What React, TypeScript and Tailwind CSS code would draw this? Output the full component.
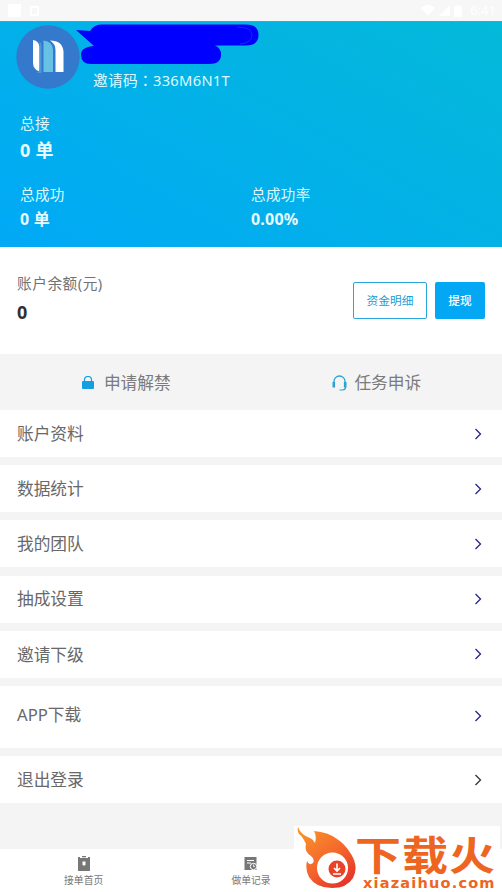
import clsx from "clsx";

const menuItems = [
  { label: "账户资料", height: "h-[47px]", color: "text-[#24248c]" },
  { label: "数据统计", height: "h-[47px]", color: "text-[#24248c]" },
  { label: "我的团队", height: "h-[47px]", color: "text-[#24248c]" },
  { label: "抽成设置", height: "h-[47px] pb-px", color: "text-[#24248c] mt-px" },
  { label: "邀请下级", height: "h-[47px]", color: "text-[#24248c]" },
  { label: "APP下载", height: "h-[62px] pb-[4px]", color: "text-[#24248c] mt-[3px]" },
  { label: "退出登录", height: "h-[47px]", color: "text-[#333333]" },
];

const StatusBar = () => (
  <div className="flex h-[21px] shrink-0 items-center justify-between bg-[#f7f7f7] pr-1.5 pl-2 text-white">
    <div className="flex items-center gap-[9px]">
      <div className="h-[13px] w-[13px] bg-white" />
      <div className="h-[10px] w-[9px] border-2 border-white" />
    </div>
    <div className="flex items-center gap-1">
      <svg width="14" height="11" viewBox="0 0 14 11" fill="currentColor">
        <path d="M0 3Q7-3 14 3L7 11Z" />
      </svg>
      <svg width="11" height="11" viewBox="0 0 11 11" fill="currentColor">
        <path d="M11 0V11H0Z" />
      </svg>
      <svg width="8" height="12" viewBox="0 0 8 12" fill="currentColor">
        <path d="M2.5 0h3v1.5H8V12H0V1.5h2.5Z" />
      </svg>
      <span className="ml-1 text-[13px] leading-none">6:41</span>
    </div>
  </div>
);

const Avatar = () => (
  <svg width="64" height="64" viewBox="0 0 64 64" className="shrink-0">
    <circle cx="32" cy="32" r="31.7" fill="#3479cc" />
    <path d="M17 15q6 1 6.500 7V46.500q-6.500-2-6.500-9Z" fill="#fff" />
    <path d="M23.500 16q2 2 2 6V48h-5q3-1 3-5Z" fill="#4a9bdb" />
    <path d="M27.500 15.500q9 1 9.500 9V47H27.500Z" fill="#66c1e4" />
    <path d="M34 15.500q12.500 0 13.500 11V47H39.500V25q0-6-5.500-9.500Z" fill="#fff" />
  </svg>
);

// marker strokes that hide the account name
const Redaction = () => (
  <svg
    className="absolute top-[2px] left-[76px]"
    width="185"
    height="43"
    viewBox="76 24 185 43"
    fill="#0000fe"
  >
    <path d="M76 30 90 31Q94 24.500 101 24.500H246Q258.500 24.500 258.500 35T246 45.500H215Q221 48 221 54.500 221 64 209 64H91Q81 64 81 54.500 81 47 94 46Z" />
    <path d="M237 27Q252 27 252 35T240 44" fill="none" stroke="#172bf4" strokeWidth="1" />
  </svg>
);

const Stat = ({
  label,
  value,
  large = false,
}: {
  label: string;
  value: string;
  large?: boolean;
}) => (
  <div className="w-[231px]">
    <div className="text-[14.500px] leading-[22px] tracking-[0.4px] text-[#dffaff]">{label}</div>
    <div
      className={clsx(
        "font-bold text-[#e6fcff]",
        large ? "mt-[3px] text-[18px] leading-[26px] tracking-[0.3px]" : "mt-[2px] text-[16px] leading-[24px] tracking-[0.2px]"
      )}
    >
      {value}
    </div>
  </div>
);

const Header = () => (
  <header className="relative h-[226px] shrink-0 border-t border-[#22b4c8] bg-linear-[30deg,#01a9f6,#04b9d9]">
    <div className="flex pt-[3px] pl-4">
      <Avatar />
      <div className="pt-[44px] pl-[13px] text-[14.700px] leading-[22px] tracking-[0.3px] text-[#dffaff]">
        邀请码<span className="font-['Noto_Sans_CJK_TC',sans-serif]">：</span>336M6N1T
      </div>
    </div>
    <Redaction />
    <div className="mt-[21px] pl-5">
      <Stat label="总接" value="0 单" large />
    </div>
    <div className="mt-[20px] flex pl-5">
      <Stat label="总成功" value="0 单" />
      <Stat label="总成功率" value="0.00%" />
    </div>
  </header>
);

const Balance = () => (
  <section className="flex h-[107px] shrink-0 justify-between bg-white pr-[17px] pl-[17px]">
    <div className="pt-[25px]">
      <div className="text-[14.700px] leading-[22px] tracking-[0.500px] text-[#737373]">账户余额(元)</div>
      <div className="mt-[5px] text-[18px] leading-[26px] font-bold text-[#303030]">0</div>
    </div>
    <div className="flex gap-2 pt-[35px]">
      <button className="h-[37px] w-[74px] rounded-[2px] border border-[#27a5dc] text-[11.700px] text-[#1b9cd5]">
        资金明细
      </button>
      <button className="h-[37px] w-[50px] rounded-[2px] bg-[#04a7f4] text-[11.700px] font-medium text-white">
        提现
      </button>
    </div>
  </section>
);

const Shortcuts = () => (
  <section className="grid h-[56px] shrink-0 grid-cols-2 pt-px pl-px text-[16.700px] text-[#7b7b7b]">
    <div className="flex items-center justify-center gap-[10px]">
      <svg width="12" height="14" viewBox="0 0 12 14">
        <path d="M2.500 7V4a3.500 3.500 0 0 1 7 0v3" fill="none" stroke="#159fe0" strokeWidth="1.200" />
        <rect y="5" width="12" height="8" rx="1" fill="#159fe0" />
      </svg>
      申请解禁
    </div>
    <div className="flex items-center justify-center gap-[7px]">
      <svg width="15" height="16" viewBox="0 0 15 16" fill="none" stroke="#28a3d2">
        <path d="M2 8V6.500a5.500 5.500 0 0 1 11 0V8" strokeWidth="1.300" />
        <path d="M1.800 7v5.500M13.200 7v5.500" strokeWidth="2.600" />
        <path d="M13.500 12q0 3-3 3H7.500" strokeWidth="1.200" />
      </svg>
      任务申诉
    </div>
  </section>
);

const TabBar = () => (
  <nav className="grid h-[43px] shrink-0 grid-cols-3 bg-white text-[9.800px] text-[#777777]">
    <div className="flex flex-col items-center pt-[7px]">
      <svg width="12" height="15" viewBox="0 0 12 15">
        <path d="M0 1h2v1h2V0h4v2h2V1h2v14H0Z" fill="#777" />
        <path d="M3.500 1.500h5" stroke="#fff" strokeWidth=".7" />
        <path d="M4.500 5.500h3v3L6 10 4.500 8.500Z" fill="#fff" />
      </svg>
      <span className="mt-[3px] leading-[14px]">接单首页</span>
    </div>
    <div className="flex flex-col items-center pt-[7px]">
      <svg width="13" height="15" viewBox="0 0 13 15">
        <path d="M0.500 1h12v13h-12Z" fill="#777" />
        <path d="M3 4.500h7M3 7h4" stroke="#fff" strokeWidth="1" />
        <circle cx="9.500" cy="10.500" r="3.200" fill="#777" stroke="#fff" />
        <path d="M9.500 8.500v2h1.500" fill="none" stroke="#fff" strokeWidth=".8" />
      </svg>
      <span className="mt-[3px] leading-[14px]">做单记录</span>
    </div>
  </nav>
);

const Watermark = () => (
  <div className="absolute top-[826px] left-[294px] h-[66px] w-[206px] bg-white">
    <svg className="absolute top-0 left-0" width="64" height="66" viewBox="0 0 64 66">
      <defs>
        <linearGradient id="flame" x1="0" y1="0" x2="0.700" y2="1">
          <stop offset="0" stopColor="#f99a2c" />
          <stop offset="0.600" stopColor="#f4662b" />
          <stop offset="1" stopColor="#e6382a" />
        </linearGradient>
      </defs>
      <path
        d="M4 1Q7 9 16 12 20 14 21 17 23 10 20 5 34 6 43 13 51 18 57 28 65 41 59 52 53 62 38 62 22 62 15 51 11 44 13 35 15 40 19 37 21 33 17 30 10 26 12 18 9 11 5 8 3 5 4 1Z"
        fill="url(#flame)"
      />
      <circle cx="38.500" cy="42" r="15.500" fill="#fff" />
      <circle cx="43" cy="43" r="8.500" fill="#e94228" />
      <path d="M43 37.500v7M40 42l3 3 3-3M39 48h8" fill="none" stroke="#fff" strokeWidth="1.600" />
    </svg>
    <div className="absolute top-[9px] left-[61px] origin-top scale-y-[0.86] text-[46px] leading-[46px] font-bold tracking-[1px] whitespace-nowrap text-[#ee6522]">
      下载火
    </div>
    <div className="absolute top-[50px] left-[69px] font-['DejaVu_Sans',sans-serif] text-[14.500px] leading-[14px] font-bold tracking-[1.200px] whitespace-nowrap text-[#ee6522]">
      xiazaihuo.com
    </div>
  </div>
);

export default function App() {
  return (
    <div className="relative flex h-[892px] w-[502px] flex-col overflow-hidden bg-[#f4f4f4] font-['Noto_Sans','Noto_Sans_CJK_SC',sans-serif]">
      <StatusBar />
      <Header />
      <Balance />
      <Shortcuts />
      <div className="flex grow flex-col gap-[8.200px]">
        {menuItems.map((item) => (
          <div
            key={item.label}
            className={clsx(
              "flex shrink-0 items-center justify-between bg-white pr-5 pl-[17px] text-[16.700px] text-[#686868]",
              item.height
            )}
          >
            <span>{item.label}</span>
            <svg className={item.color} width="8" height="12" viewBox="0 0 8 12" fill="none" stroke="currentColor">
              <path d="M1.500 1 6.500 6l-5 5" strokeWidth="1.300" />
            </svg>
          </div>
        ))}
      </div>
      <TabBar />
      <Watermark />
    </div>
  );
}
